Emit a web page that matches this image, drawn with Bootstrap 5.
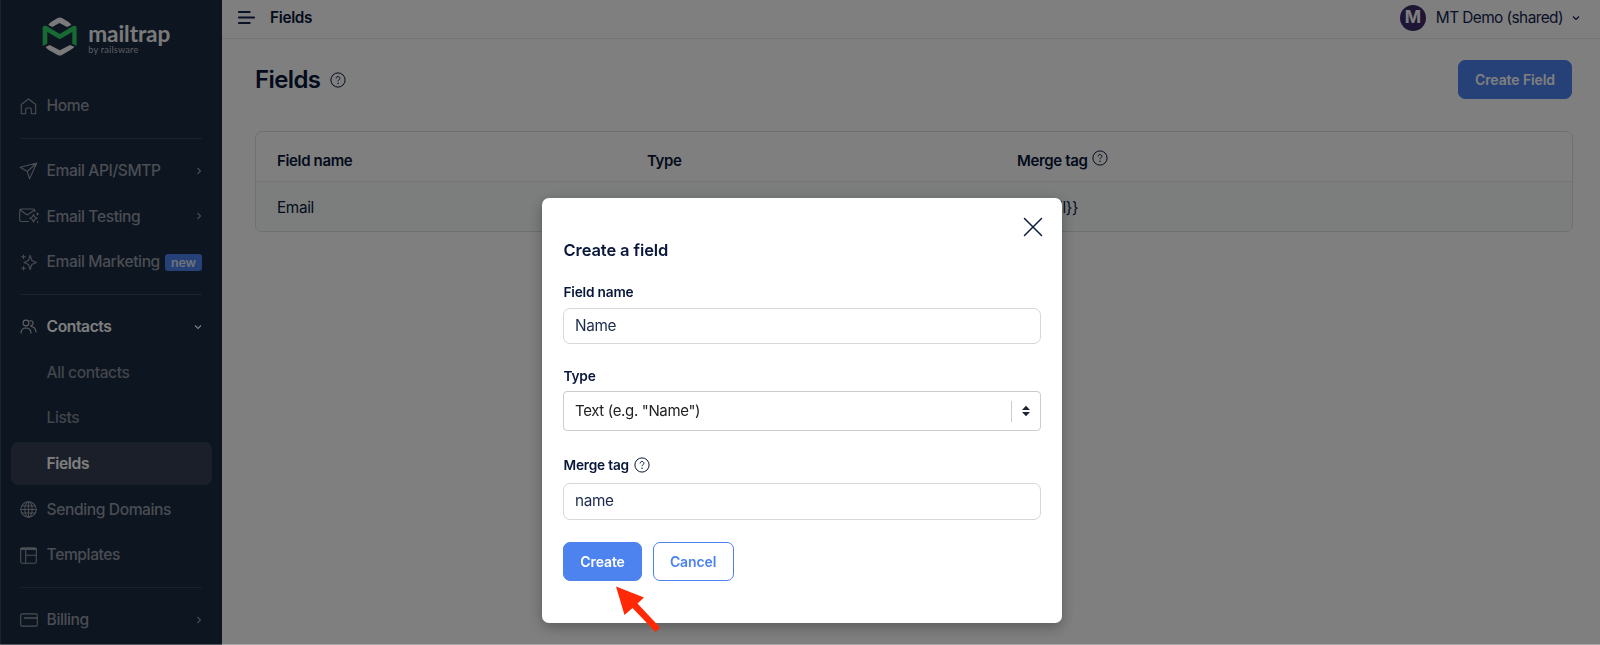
<!DOCTYPE html>
<html lang="en">
<head>
  <meta charset="UTF-8" />
  <meta name="viewport" content="width=device-width, initial-scale=1" />
  <title>Fields | Mailtrap</title>
  <link href="https://cdn.jsdelivr.net/npm/bootstrap@5.3.3/dist/css/bootstrap.min.css" rel="stylesheet" />
  <style>
    body { font-family: Inter, "Liberation Sans", sans-serif; color: #08173a; font-size: 15.3px; letter-spacing: -.35px; height: 645px; overflow: hidden; }
    svg { display: block; flex: none; }
    .line-icon { fill: none; stroke: currentColor; stroke-width: 1.1; stroke-linecap: round; stroke-linejoin: round; }

    /* sidebar */
    .sidebar { width: 222px; height: 645px; background: #1a2a42; border-left: 1px solid #35465c; color: #959ba5; overflow: hidden; }
    .brand { height: 83px; padding: 16px 0 0 40.5px; gap: 11.5px; }
    .brand-name { font: 700 22.6px/24px Lato, sans-serif; color: #f4f4f4; letter-spacing: -.1px; margin-top: 6px; }
    .brand-by { font: 400 9.2px/9px Lato, sans-serif; color: #b4b8be; letter-spacing: .2px; margin-top: -1.5px; }
    .side-item { height: 45.66px; padding: .6px 20px 0 14.6px; font-size: 15.6px; font-weight: 500; letter-spacing: -.4px; color: inherit; white-space: nowrap; }
    .side-item .side-icon { width: 26px; display: flex; justify-content: center; margin-right: 5px; }
    .side-item.current { color: #fff; font-weight: 600; }
    .side-item.current .side-icon { color: #c0c4ca; }
    .side-sub { padding-left: 45.6px; color: #848b96; }
    .side-active { height: 42.66px; margin: 1.5px 10px; padding-left: 35.6px; border-radius: 7px; background: #353e54; color: #fff; font-weight: 600; }
    .side-rule { height: 1px; margin: 9px 20px; background: #35455c; }
    .new-tag { font-size: 12.5px; font-weight: 600; line-height: 17px; padding: 0 6px; border-radius: 3px; letter-spacing: -.1px; background: #4c83ee; color: #dfe6f5; }

    /* page */
    .topbar { height: 39px; padding: 0 20px 3px 16px; border-bottom: 1px solid #e6e7ea; }
    .crumb { padding-left: 15px; padding-top: 1px; font-weight: 600; letter-spacing: -.3px; }
    .avatar { width: 26px; height: 26px; background: #3f2d6d; color: #fff; font-weight: 700; font-size: 17.5px; }
    .user-name { margin: 0 9px 0 10px; color: #14244f; letter-spacing: -.57px; font-size: 15.4px; }
    .page-head { height: 81px; padding: 0 28px 0 33px; }
    .page-title { font-size: 24px; font-weight: 600; letter-spacing: -.6px; margin-right: 10px; }
    .btn-main { height: 39.5px; border-radius: 7px; padding: 0 16px; font-size: 14px; font-weight: 600; letter-spacing: -.1px; background: #4c83ee; color: #fff; border: 1px solid #4c83ee; }
    .btn-ghost { background: #fff; color: #4c83ee; }
    .field-table { margin: 11px 27px 0 33px; border: 1px solid #dcdee3; border-radius: 7px; overflow: hidden; }
    .field-row { height: 49px; padding: 3px 0 0 21px; }
    .field-row > div { width: 370px; }
    .field-head { height: 50px; padding-top: 9px; border-bottom: 1px solid #ebecee; font-weight: 600; font-size: 15px; }
    .field-body { background: #f8fcfa; }

    /* dialog */
    .dim { background: rgba(0, 0, 0, .5); border-bottom: 1px solid rgba(255, 255, 255, .3); }
    .dialog-box { width: 520px; height: 425px; margin: 198px 0 0 542px; border: 0; border-radius: 7px; padding: 0 21px; box-shadow: 0 4px 14px rgba(0, 0, 0, .3); }
    .dialog-close { height: 37px; padding-top: 18.5px; margin-right: -1.5px; }
    .dialog-title { font-size: 16.5px; font-weight: 600; line-height: 22px; margin: 4px 0 22px .5px; letter-spacing: -.1px; }
    .dialog-label { font-size: 13.7px; font-weight: 600; line-height: 18px; letter-spacing: -.2px; margin-left: .5px; margin-bottom: 7px; }
    .type-label { margin-top: 23px; margin-bottom: 6px; }
    .tag-label { margin-top: 25px; margin-bottom: 9px; gap: 5px; }
    .text-box { height: 36px; border: 1px solid #d6d7dd; border-radius: 7px; padding: 0 11px; font-size: 15.3px; color: #1b294b; }
    .text-box-tag { height: 37px; }
    .select-box { height: 40px; border: 1px solid #cbccce; border-radius: 4px; padding: 0 10px 0 11px; font-size: 15px; color: #222; }
    .select-bar { width: 1px; height: 21px; background: #ccc; margin-right: 10px; }
    .dialog-actions { margin-top: 21.5px; gap: 10.5px; }
    .dialog-actions .btn-main { padding: 0 16.3px; }
    .pointer-arrow { position: absolute; left: 612px; top: 582px; }
  </style>
</head>
<body>
  <svg width="0" height="0" class="position-absolute">
    <symbol id="help" viewBox="0 0 16 16">
      <circle cx="8" cy="8" r="7.1" fill="none" stroke="currentColor" stroke-width="1" />
      <path d="M6.1 6.4c0-2.5 3.8-2.5 3.8-.1 0 1.3-1.8 1.5-1.8 2.9" fill="none" stroke="currentColor" stroke-width="1" />
      <circle cx="8.1" cy="11.2" r=".7" fill="currentColor" />
    </symbol>
    <symbol id="chev-right" viewBox="0 0 6 8">
      <path d="M1.5 1l3 3-3 3" fill="none" stroke="currentColor" stroke-width="1.1" />
    </symbol>
    <symbol id="chev-down" viewBox="0 0 8 6">
      <path d="M1 1.5l3 3 3-3" fill="none" stroke="currentColor" stroke-width="1.1" />
    </symbol>
  </svg>

  <div class="d-flex">
    <nav class="sidebar flex-shrink-0">
      <div class="brand d-flex">
        <svg width="35.3" height="40" viewBox="124 47 106 120">
          <path d="M143 74q2-5 8-9l20-12q6.500-3.500 13 0l20 12q6 4 8 9l-13 6-22.500-12-21.500 12z" fill="#f4f4f4" />
          <path d="M135 140l12-6 30.500 16 30.500-16 13 5q-2 4-8 8l-29 17q-6.500 3.500-13 0l-28-16q-6-4-8-8z" fill="#f4f4f4" />
          <path d="M126 137V82q0-6 7-6 3 0 5 1l39.500 24 39.500-24q2-1 5-1 6 0 6 6v55l-13-7V95l-37.500 22L140 95v35z" fill="#2fd566" />
        </svg>
        <div>
          <div class="brand-name">mailtrap</div>
          <div class="brand-by">by railsware</div>
        </div>
      </div>
      <div class="side-item d-flex align-items-center">
        <span class="side-icon"><svg class="line-icon" width="17" height="17" viewBox="0 0 17 17"><path d="M1.300 6.500L8.500 1l7.200 5.500v9.200h-4.400v-4.400a1.300 1.300 0 0 0-1.300-1.300H7a1.300 1.300 0 0 0-1.300 1.300v4.400H1.300z" /></svg></span>
        Home
      </div>
      <div class="side-rule"></div>
      <div class="side-item d-flex align-items-center">
        <span class="side-icon"><svg class="line-icon" width="19" height="18" viewBox="0 0 19 18"><path d="M1.200 5.200L17.800 1l-7.300 15.800-2.300-7.300zM8.200 9.500L17.800 1" /></svg></span>
        Email API/SMTP
        <svg class="ms-auto" width="6" height="8"><use href="#chev-right" /></svg>
      </div>
      <div class="side-item d-flex align-items-center">
        <span class="side-icon"><svg class="line-icon" width="20" height="16" viewBox="0 0 20 16"><path d="M9.500 13.500H2.300A1.600 1.600 0 0 1 .7 11.900V2.600A1.600 1.600 0 0 1 2.300 1h12a1.600 1.600 0 0 1 1.600 1.600v1M1.200 2l7 5 7-4.800M14.500 6.500l1.200 2.600 2.500 1.200-2.500 1.200-1.200 2.600-1.200-2.600-2.500-1.200 2.500-1.200zM18.500 5v2M17.500 6h2M18.600 13.600v1" /></svg></span>
        Email Testing
        <svg class="ms-auto" width="6" height="8"><use href="#chev-right" /></svg>
      </div>
      <div class="side-item d-flex align-items-center">
        <span class="side-icon"><svg class="line-icon" width="16" height="17" viewBox="0 0 16 17"><path d="M9.200 1.500l1.600 5 4.500 2-4.500 2-1.600 5.200-1.700-5.200-4.400-2 4.400-2zM2.500 1v3.600M.7 2.800h3.600M2.500 12.500V16M.7 14.300h3.600" /></svg></span>
        Email Marketing
        <span class="new-tag ms-auto">new</span>
      </div>
      <div class="side-rule"></div>
      <div class="side-item current d-flex align-items-center">
        <span class="side-icon"><svg class="line-icon" width="17" height="15" viewBox="0 0 17 15"><circle cx="6" cy="4" r="2.900" /><path d="M1 14c.2-3 2-5 5-5s4.800 2 5 5M9.800 2a2.400 2.400 0 1 1 1 4.600M11 7.500c2.700.2 4.800 2.500 5 5.500" /></svg></span>
        Contacts
        <svg class="ms-auto" width="8" height="6"><use href="#chev-down" /></svg>
      </div>
      <div class="side-item side-sub d-flex align-items-center">All contacts</div>
      <div class="side-item side-sub d-flex align-items-center">Lists</div>
      <div class="side-item side-active d-flex align-items-center">Fields</div>
      <div class="side-item d-flex align-items-center">
        <span class="side-icon"><svg class="line-icon" width="17" height="17" viewBox="0 0 17 17"><circle cx="8.500" cy="8.500" r="7.700" /><ellipse cx="8.500" cy="8.500" rx="3.700" ry="7.700" /><path d="M8.500.8v15.400M.8 8.500h15.400M2 5h13M2 12h13" /></svg></span>
        Sending Domains
      </div>
      <div class="side-item d-flex align-items-center">
        <span class="side-icon"><svg class="line-icon" width="17" height="17" viewBox="0 0 17 17"><rect x=".7" y=".7" width="15.600" height="15.600" rx="1.600" /><path d="M1 2h15" stroke-width="2" /><path d="M5.700 3v13M5.700 8.300H16" /></svg></span>
        Templates
      </div>
      <div class="side-rule"></div>
      <div class="side-item d-flex align-items-center">
        <span class="side-icon"><svg class="line-icon" width="18" height="14" viewBox="0 0 18 14"><rect x=".7" y=".9" width="16.600" height="12.200" rx="1.300" /><path d="M4.500 5H17" stroke-width="1.500" /></svg></span>
        Billing
        <svg class="ms-auto" width="6" height="8"><use href="#chev-right" /></svg>
      </div>
    </nav>

    <main class="flex-grow-1">
      <div class="topbar d-flex align-items-center">
        <svg width="17" height="13" viewBox="0 0 17 13"><path d="M.8 1h11M.8 6.500h15.400M.8 12h11" stroke="#14244f" stroke-width="1.800" stroke-linecap="round" /></svg>
        <span class="crumb me-auto">Fields</span>
        <span class="avatar rounded-circle d-flex align-items-center justify-content-center">M</span>
        <span class="user-name">MT Demo (shared)</span>
        <svg width="8" height="6"><use href="#chev-down" /></svg>
      </div>
      <div class="page-head d-flex align-items-center">
        <span class="page-title">Fields</span>
        <svg width="16" height="16"><use href="#help" /></svg>
        <button class="btn btn-main ms-auto">Create Field</button>
      </div>
      <div class="field-table">
        <div class="field-row field-head d-flex align-items-center">
          <div>Field name</div>
          <div>Type</div>
          <div class="d-flex gap-1">Merge tag <svg width="16" height="16"><use href="#help" /></svg></div>
        </div>
        <div class="field-row field-body d-flex align-items-center">
          <div>Email</div>
          <div>Text</div>
          <div>{{email}}</div>
        </div>
      </div>
    </main>
  </div>

  <div class="modal d-block dim overflow-hidden" tabindex="-1">
    <div class="modal-content dialog-box">
      <div class="dialog-close d-flex justify-content-end">
        <svg width="20" height="20" viewBox="0 0 20 20"><path d="M1.500 1.500l17 17M18.500 1.500l-17 17" stroke="#0b1a3e" stroke-width="1.500" stroke-linecap="round" /></svg>
      </div>
      <div class="dialog-title">Create a field</div>
      <div class="dialog-label">Field name</div>
      <div class="text-box d-flex align-items-center">Name</div>
      <div class="dialog-label type-label">Type</div>
      <div class="select-box d-flex align-items-center">
        Text (e.g. "Name")
        <span class="select-bar ms-auto"></span>
        <svg width="8" height="12" viewBox="0 0 8 12"><path d="M4 .8l4 4.300H0zM4 11.200L0 6.900h8z" fill="#1b2433" /></svg>
      </div>
      <div class="dialog-label tag-label d-flex align-items-center">Merge tag <svg width="16" height="16"><use href="#help" /></svg></div>
      <div class="text-box text-box-tag d-flex align-items-center">name</div>
      <div class="dialog-actions d-flex">
        <button class="btn btn-main">Create</button>
        <button class="btn btn-main btn-ghost">Cancel</button>
      </div>
    </div>
    <svg class="pointer-arrow" width="50" height="54" viewBox="0 0 50 54">
      <path d="M4 4.500L32 15.500 25.500 21.500 48 45.500 43.500 50 20.500 26 12.500 33z" fill="#ff2a05" />
    </svg>
  </div>

  <script src="https://cdn.jsdelivr.net/npm/bootstrap@5.3.3/dist/js/bootstrap.bundle.min.js"></script>
</body>
</html>
